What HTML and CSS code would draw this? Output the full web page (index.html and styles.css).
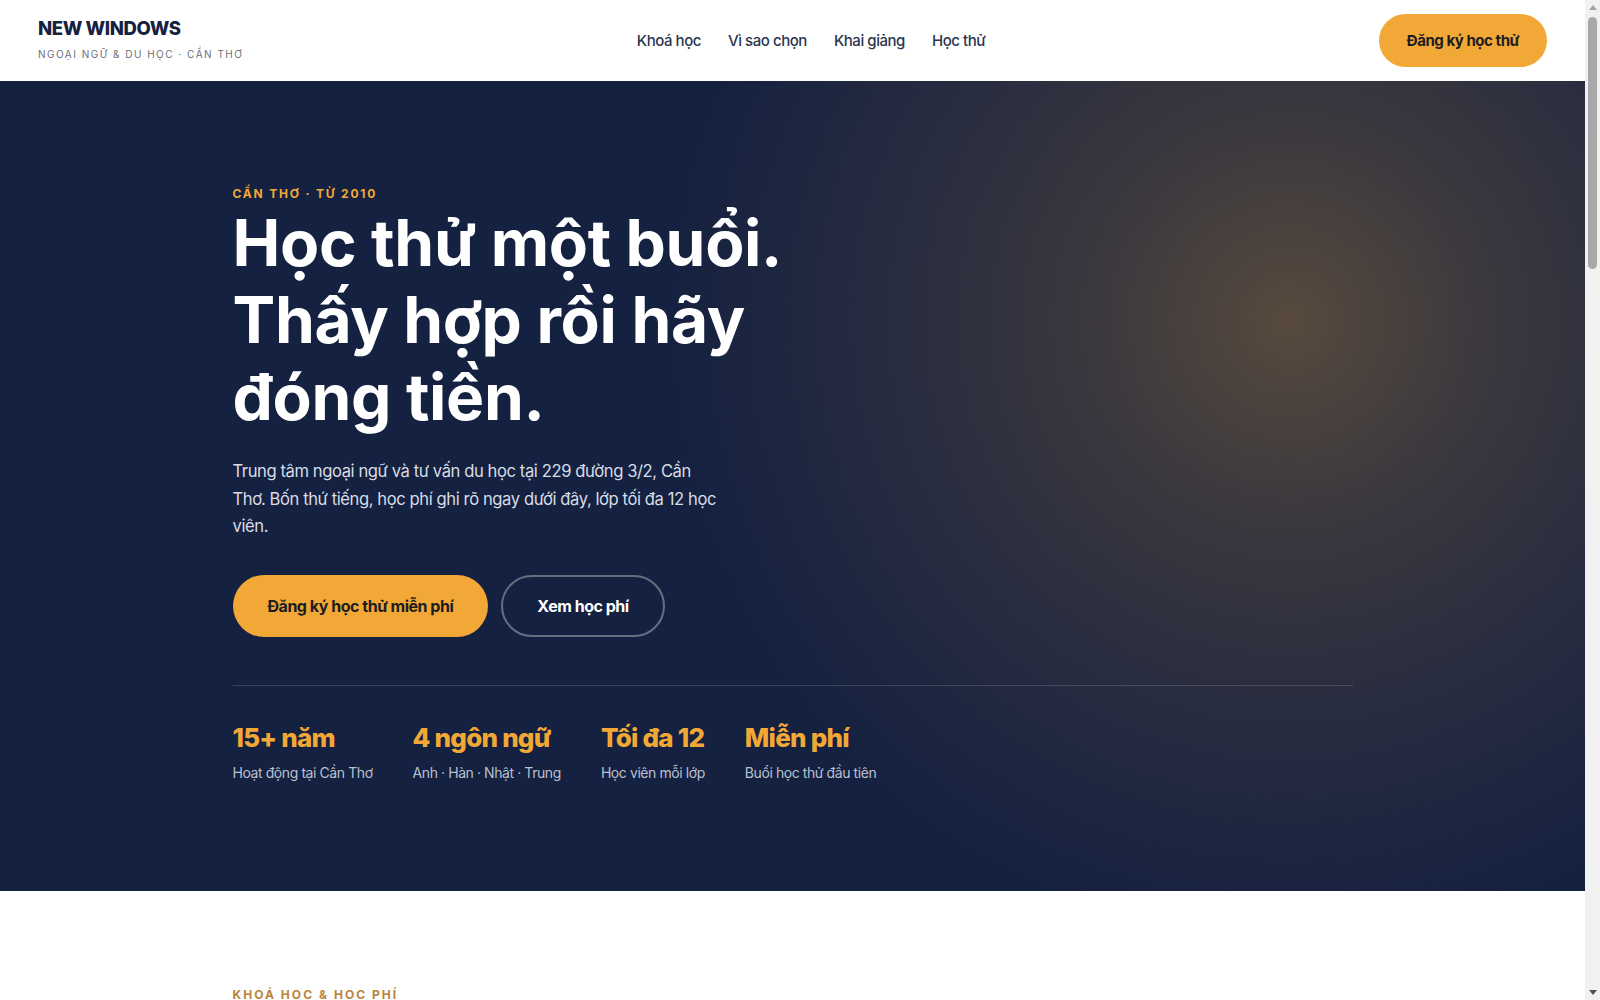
FILE: index.html
```html
<!DOCTYPE html>
<html lang="vi">
<head>
  <meta charset="UTF-8">
  <title>New Windows – Ngoại ngữ & Du học Cần Thơ</title>
  <meta name="viewport" content="width=device-width, initial-scale=1.0">
  <link rel="stylesheet" href="styles.css">
</head>
<body>
  <header class="topbar">
    <a class="brand" href="#">
      <span class="brand-name">NEW WINDOWS</span>
      <span class="brand-sub">Ngoại ngữ &amp; Du học · Cần Thơ</span>
    </a>
    <nav class="menu">
      <a href="#khoa-hoc">Khoá học</a>
      <a href="#vi-sao">Vì sao chọn</a>
      <a href="#khai-giang">Khai giảng</a>
      <a href="#hoc-thu">Học thử</a>
    </nav>
    <a class="btn btn-gold btn-small" href="#hoc-thu">Đăng ký học thử</a>
  </header>

  <section class="hero">
    <div class="wrap">
      <p class="eyebrow">Cần Thơ · Từ 2010</p>
      <h1>Học thử một buổi.<br>Thấy hợp rồi hãy<br>đóng tiền.</h1>
      <p class="lead">Trung tâm ngoại ngữ và tư vấn du học tại 229 đường 3/2, Cần Thơ. Bốn thứ tiếng, học phí ghi rõ ngay dưới đây, lớp tối đa 12 học viên.</p>
      <div class="actions">
        <a class="btn btn-gold" href="#hoc-thu">Đăng ký học thử miễn phí</a>
        <a class="btn btn-ghost" href="#khoa-hoc">Xem học phí</a>
      </div>
      <div class="stats">
        <div class="stat">
          <strong>15+ năm</strong>
          <span>Hoạt động tại Cần Thơ</span>
        </div>
        <div class="stat">
          <strong>4 ngôn ngữ</strong>
          <span>Anh · Hàn · Nhật · Trung</span>
        </div>
        <div class="stat">
          <strong>Tối đa 12</strong>
          <span>Học viên mỗi lớp</span>
        </div>
        <div class="stat">
          <strong>Miễn phí</strong>
          <span>Buổi học thử đầu tiên</span>
        </div>
      </div>
    </div>
  </section>

  <section class="courses" id="khoa-hoc">
    <div class="wrap">
      <p class="eyebrow eyebrow-dark">Khoá học &amp; Học phí</p>
      <h2>Bốn thứ tiếng, một bảng giá rõ ràng.</h2>
      <div class="cards">
        <div class="card">
          <h3>Tiếng Anh</h3>
          <p>Giao tiếp, IELTS, tiếng Anh thiếu nhi.</p>
          <div class="price">từ 1.800.000đ / tháng</div>
        </div>
        <div class="card">
          <h3>Tiếng Hàn</h3>
          <p>Sơ cấp đến TOPIK II, luyện phỏng vấn du học.</p>
          <div class="price">từ 1.600.000đ / tháng</div>
        </div>
        <div class="card">
          <h3>Tiếng Nhật</h3>
          <p>N5 đến N3, chuẩn bị hồ sơ du học Nhật Bản.</p>
          <div class="price">từ 1.700.000đ / tháng</div>
        </div>
        <div class="card">
          <h3>Tiếng Trung</h3>
          <p>HSK 1 đến HSK 4, giao tiếp thương mại.</p>
          <div class="price">từ 1.500.000đ / tháng</div>
        </div>
      </div>
    </div>
  </section>

  <div class="scrollbar" aria-hidden="true">
    <span class="sb-arrow sb-up"></span>
    <span class="sb-thumb"></span>
    <span class="sb-arrow sb-down"></span>
  </div>
</body>
</html>
```

FILE: styles.css
```css
body {
  margin: 0 15px 0 0;
  font-family: Inter, "Noto Sans", "Liberation Sans", sans-serif;
  color: #16213f;
  background-color: #fff;
}
a {
  text-decoration: none;
  color: inherit;
}

/* fake scrollbar */
.scrollbar {
  position: fixed;
  top: 0;
  right: 0;
  bottom: 0;
  width: 15px;
  background-color: #f1f1f1;
  display: flex;
  flex-direction: column;
  align-items: center;
}
.sb-arrow {
  width: 0;
  height: 0;
  border-left: 4px solid transparent;
  border-right: 4px solid transparent;
}
.sb-up {
  margin-top: 5px;
  border-bottom: 5px solid #a3a3a3;
}
.sb-down {
  margin-top: auto;
  margin-bottom: 5px;
  border-top: 5px solid #505050;
}
.sb-thumb {
  margin-top: 7px;
  width: 9px;
  height: 252px;
  border-radius: 5px;
  background-color: #a8a8a8;
}

/* header */
.topbar {
  height: 81px;
  padding: 0 38px;
  display: flex;
  align-items: center;
  justify-content: space-between;
  box-sizing: border-box;
}
.brand {
  display: flex;
  flex-direction: column;
  gap: 9px;
  margin-top: -5px;
}
.brand-name {
  font-size: 18.5px;
  font-weight: 800;
  letter-spacing: -0.02em;
  color: #16213f;
}
.brand-sub {
  font-size: 10px;
  letter-spacing: 0.15em;
  text-transform: uppercase;
  color: #6b7080;
}
.menu {
  display: flex;
  gap: 27px;
}
.menu a {
  font-size: 15px;
  font-weight: 500;
  letter-spacing: -0.03em;
  color: #2c3550;
}

/* buttons */
.btn {
  display: inline-flex;
  align-items: center;
  justify-content: center;
  border-radius: 999px;
  font-weight: 700;
  font-size: 16px;
  letter-spacing: -0.03em;
  box-sizing: border-box;
}
.btn-gold {
  background-color: #f2a836;
  color: #1d1d1f;
  height: 62px;
  padding: 0 35px;
}
.btn-small {
  height: 53px;
  padding: 0 28px;
  font-size: 15px;
}
.btn-ghost {
  height: 62px;
  padding: 0 34px;
  color: #fff;
  border: 2px solid rgba(255, 255, 255, 0.35);
}

/* hero */
.hero {
  background-color: #152140;
  background-image: radial-gradient(circle at 1290px 240px, rgba(242, 168, 54, 0.3) 0, rgba(242, 168, 54, 0.18) 180px, rgba(242, 168, 54, 0.09) 380px, rgba(242, 168, 54, 0) 620px);
  color: #fff;
  padding: 105px 0 110px;
}
.wrap {
  max-width: 1120px;
  margin: 0 auto;
}
.eyebrow {
  margin: 0 0 4px;
  font-size: 12px;
  font-weight: 700;
  letter-spacing: 0.15em;
  text-transform: uppercase;
  color: #f2a836;
}
.hero h1 {
  margin: 0;
  font-size: 64px;
  line-height: 1.2;
  font-weight: 700;
  letter-spacing: -0.005em;
}
.lead {
  margin: 23px 0 0;
  max-width: 490px;
  font-size: 16.6px;
  line-height: 1.65;
  letter-spacing: -0.025em;
  color: #d8dce6;
}
.actions {
  display: flex;
  gap: 13px;
  margin-top: 34px;
}
.stats {
  margin-top: 48px;
  padding-top: 36px;
  border-top: 1px solid rgba(255, 255, 255, 0.15);
  display: flex;
  gap: 40px;
}
.stat {
  display: flex;
  flex-direction: column;
  gap: 11px;
}
.stat strong {
  font-size: 26px;
  font-weight: 800;
  letter-spacing: -0.03em;
  color: #f2a836;
}
.stat span {
  font-size: 14px;
  letter-spacing: -0.03em;
  color: #b9c0d0;
}

/* courses */
.courses {
  padding: 96px 0 100px;
}
.eyebrow-dark {
  color: #b9843a;
  letter-spacing: 0.17em;
}
.courses h2 {
  margin: 10px 0 40px;
  font-size: 40px;
  letter-spacing: -0.03em;
}
.cards {
  display: grid;
  grid-template-columns: repeat(4, 1fr);
  gap: 20px;
}
.card {
  border: 1px solid #e3e5ea;
  border-radius: 16px;
  padding: 24px;
}
.card h3 {
  margin: 0 0 8px;
  font-size: 20px;
}
.card p {
  margin: 0 0 16px;
  color: #555b6b;
  font-size: 15px;
  line-height: 1.5;
}
.price {
  font-weight: 700;
  color: #b9843a;
}
```
